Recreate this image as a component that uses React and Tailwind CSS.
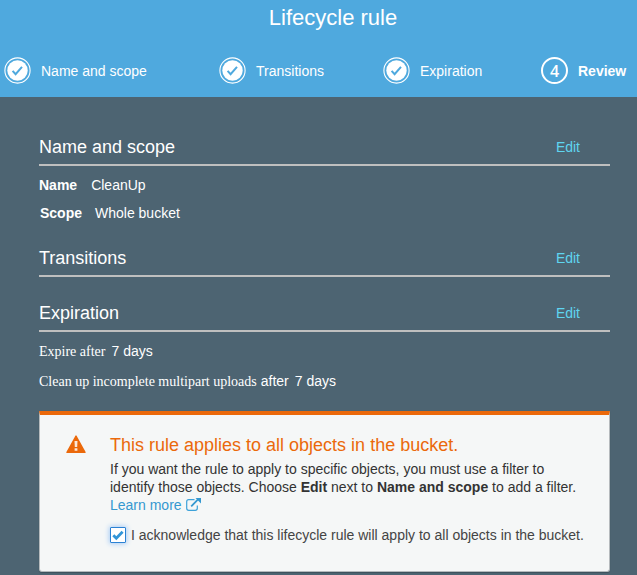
const sans = "font-['Liberation_Sans',Arial,sans-serif]";

function DoneBadge() {
  return (
    <svg className="block h-[28px] w-[28px] shrink-0" viewBox="0 0 28 28" fill="none">
      <circle cx="14.5" cy="13.500" r="12.6" stroke="#fff" strokeWidth="1.1" />
      <circle cx="14.5" cy="13.500" r="10.2" fill="#fff" />
      <path d="M9.600 13.800l3 3.400 6.400-7.400" stroke="#4fa9de" strokeWidth="2" />
    </svg>
  );
}

function Step({ label, width }) {
  return (
    <div className={`flex h-[28px] items-center ${width}`}>
      <DoneBadge />
      <span className="ml-[10px] text-[14px] leading-[20px]">{label}</span>
    </div>
  );
}

function SectionHeading({ title }) {
  return (
    <div className="flex h-[37px] justify-between border-b-2 border-[#bfbfbf] pr-[30px]">
      <h2 className="text-[18px] leading-[36px]">{title}</h2>
      <a className="text-[14px] leading-[36px] text-[#5fd5f0]">Edit</a>
    </div>
  );
}

function WarningIcon() {
  return (
    <svg className="block h-[20px] w-[20px]" viewBox="0 0 20 20">
      <path d="M10 1.100L19 17.400H1z" fill="#eb690b" stroke="#eb690b" strokeWidth="1.400" strokeLinejoin="round" />
      <path d="M8.500 6h3l-.3 6H8.800zM8.600 13.200h2.800v2.600H8.600z" fill="#fbe9db" />
    </svg>
  );
}

function ExternalIcon() {
  return (
    <svg className="mt-[2px] block h-[15px] w-[15px]" viewBox="0 0 15 15" fill="none">
      <path d="M8.500 1.700H2.700Q.7 1.700.7 3.700v6.600q0 2 2 2h6.600q2 0 2-2V7.500" stroke="#3da2d9" strokeWidth="1.200" />
      <path d="M5.200 8.300L12.300 1.200" stroke="#3498d0" strokeWidth="1.800" />
      <path d="M9.500 0H15v5.500z" fill="#3498d0" />
    </svg>
  );
}

function CheckedBox() {
  return (
    <span className="flex h-[16px] w-[16px] shrink-0 items-center justify-center rounded-[1px] border border-[#2b82d4] bg-white shadow-[0_0_5px_1px_#a9cdf5]">
      <svg className="block h-[14px] w-[14px]" viewBox="0 0 14 14" fill="none">
        <path d="M2.3 7.2l3 3L11.600 3.800" stroke="#3195d8" strokeWidth="2.800" />
      </svg>
    </span>
  );
}

export default function App() {
  return (
    <div className={`h-[575px] w-[637px] overflow-hidden bg-[#4d6472] text-[14px] text-white ${sans}`}>
      <header className="h-[97px] bg-[#4fa9de]">
        <h1 className="h-[57px] pl-[29px] text-center text-[22px] leading-[35px]">Lifecycle rule</h1>
        <div className="flex pl-[3px]">
          <Step label="Name and scope" width="w-[215px]" />
          <Step label="Transitions" width="w-[164px]" />
          <Step label="Expiration" width="w-[159px]" />
          <div className="flex h-[27px] items-center">
            <span className="flex h-[27px] w-[27px] items-center justify-center rounded-full border-2 border-white pt-px font-['Open_Sans',sans-serif] text-[16px] leading-[20px] font-semibold">4</span>
            <span className="ml-[10px] pt-px leading-[20px] font-bold">Review</span>
          </div>
        </div>
      </header>

      <main className="ml-[39px] w-[571px] pt-[32px]">
        <SectionHeading title="Name and scope" />
        <div className="h-[74px] pt-[5px] leading-[28px]">
          <div className="flex gap-[14px]">
            <b>Name</b>
            <span>CleanUp</span>
          </div>
          <div className="flex gap-[13px] pl-px">
            <b>Scope</b>
            <span>Whole bucket</span>
          </div>
        </div>

        <SectionHeading title="Transitions" />
        <div className="h-[18px]" />

        <SectionHeading title="Expiration" />
        <div className="h-[79px] pt-[4px] leading-[30px]">
          <div className="flex gap-[6px]">
            <span className="pt-px font-['Liberation_Serif',serif] leading-[29px]">Expire after</span>
            <span>7 days</span>
          </div>
          <div className="flex">
            <span className="pt-px font-['Liberation_Serif',serif] leading-[29px]">Clean up incomplete multipart uploads</span>
            <span className="ml-[4px]">after</span>
            <span className="ml-[6px]">7 days</span>
          </div>
        </div>

        <section className="flex h-[161px] rounded-b-[3px] border-x border-b border-t-4 border-x-[#b5babd] border-t-[#eb690b] border-b-[#b5babd] bg-[#f5f7f7] text-[#333] shadow-[0_1px_1px_#3e505b]">
          <div className="w-[70px] shrink-0 pt-[20px] pl-[26px]">
            <WarningIcon />
          </div>
          <div className="pt-[19px]">
            <h3 className="h-[26px] text-[18px] leading-[22px] whitespace-nowrap text-[#eb690b]">
              This rule applies to all objects in the bucket.
            </h3>
            <p className="leading-[18px] whitespace-nowrap">
              If you want the rule to apply to specific objects, you must use a filter to
              <br />
              identify those objects. Choose <b>Edit</b> next to <b>Name and scope</b> to add a filter.
            </p>
            <a className="flex h-[18px] items-start gap-[4px] leading-[18px] text-[#3498d0]">
              Learn more
              <ExternalIcon />
            </a>
            <label className="mt-[12px] flex h-[18px] items-center gap-[5px] leading-[18px] whitespace-nowrap text-[#444]">
              <CheckedBox />
              I acknowledge that this lifecycle rule will apply to all objects in the bucket.
            </label>
          </div>
        </section>
      </main>
    </div>
  );
}
